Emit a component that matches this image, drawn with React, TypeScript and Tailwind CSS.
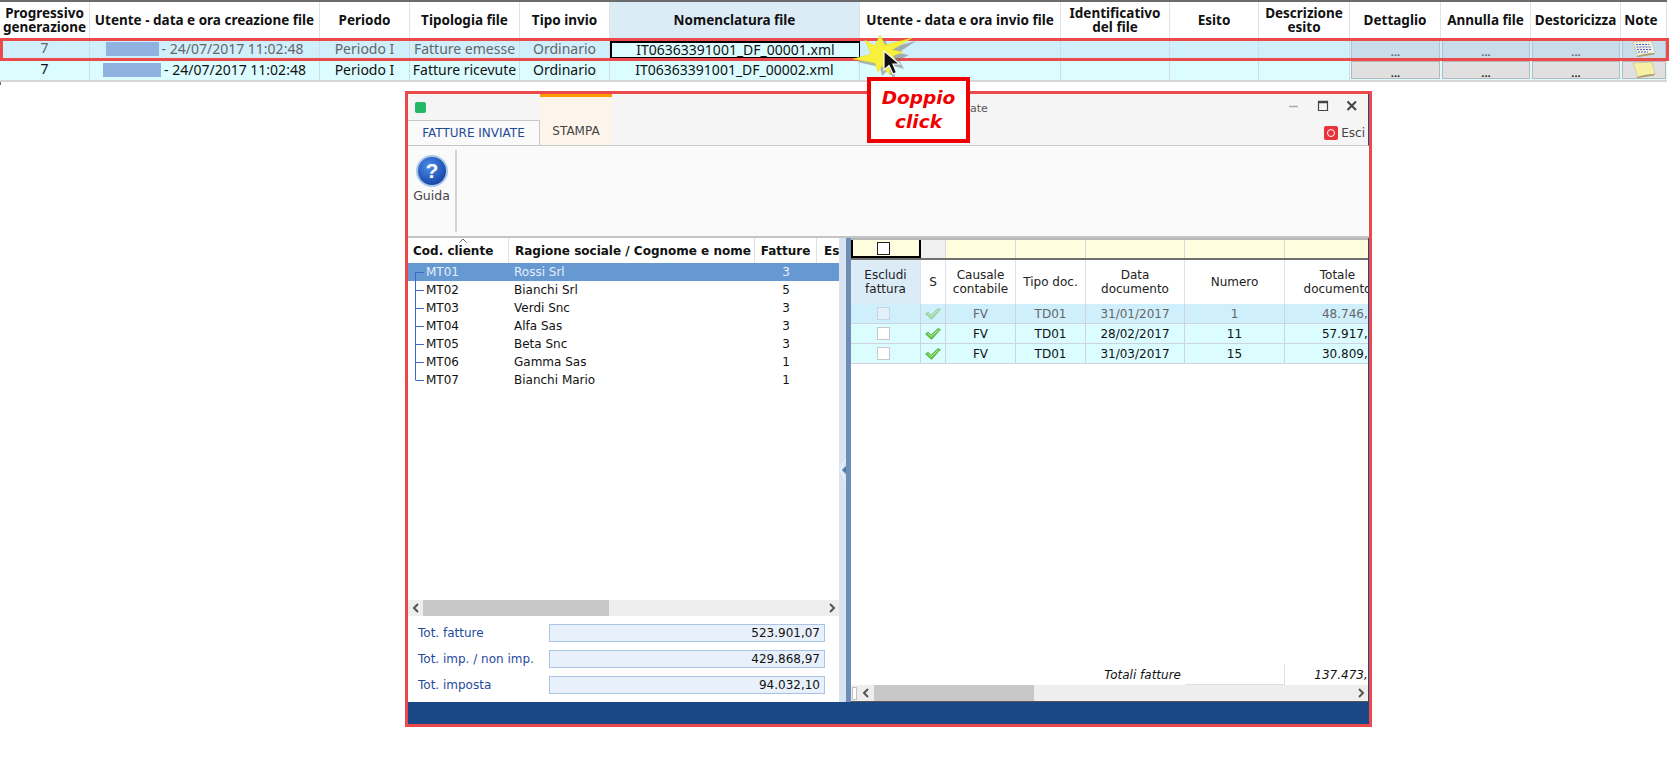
import React from "react";

const topCols = "grid grid-cols-[90px_230px_90px_110px_90px_250px_201px_109px_89px_91px_91px_90px_90px_46px]";
const heads = ["Progressivo generazione", "Utente - data e ora creazione file", "Periodo", "Tipologia file", "Tipo invio", "Nomenclatura file", "Utente - data e ora invio file", "Identificativo del file", "Esito", "Descrizione esito", "Dettaglio", "Annulla file", "Destoricizza", "Note"];

function Note({ lines }: { lines: boolean }) {
  return (
    <svg width="26" height="16" viewBox="0 0 24 16">
      <path d="M1 1 L20 0 L23 12 L6 15.500 Z" fill={lines ? "#f0f0dc" : "#f6f0a4"} stroke="#b8b088" strokeWidth="0.5" />
      <path d="M4 15.500 Q12 12 23 12 L22 13.500 L6 16 Z" fill="#a8a070" />
      {lines && <path d="M4 3.500h13M4.500 6h14M5 8.500h14M6 11h10" stroke="#4a62d8" strokeWidth="1" strokeDasharray="2 1" />}
    </svg>
  );
}

function TopRow({ dim, blue, name, kind, file, bg, h }: { dim: boolean; blue: string; name: string; kind: string; file: string; bg: string; h: string }) {
  const text = dim ? "text-[#666]" : "text-[#111]";
  const cell = "flex items-center justify-center border-r border-[#d2dbe0] whitespace-nowrap";
  const btn = dim
    ? "border-[#b4c2ce] bg-[#c8dcea] text-[#666]"
    : "border-[#b8b8b8] bg-[#e0e0e0] text-[#222]";
  return (
    <div className={`${topCols} ${bg} ${text} ${h} text-[14px] leading-none`}>
      <div className={`${cell} h-full pb-[2px]`}>7</div>
      <div className={`${cell} h-full`}>
        <span className={`${name} h-[14px] bg-[#8fb2e0] mr-[3px]`} />- 24/07/2017 11:02:48
      </div>
      <div className={`${cell} h-full`}>Periodo I</div>
      <div className={`${cell} h-full`}>{kind}</div>
      <div className={`${cell} h-full`}>Ordinario</div>
      <div className={`${cell} text-[#111] ${blue}`}>{file}</div>
      <div className={`${cell} h-full`} />
      <div className={`${cell} h-full`} />
      <div className={`${cell} h-full`} />
      <div className={`${cell} h-full`} />
      {[0, 1, 2].map((i) => (
        <div key={i} className="px-[1px] py-[1px] h-full">
          <div className={`h-full border ${btn} flex items-center justify-center pt-1 font-bold text-[11px]`}>...</div>
        </div>
      ))}
      <div className="px-[1px] py-[1px] h-full">
        <div className={`h-full border ${btn} flex items-center justify-center`}>
          <Note lines={dim} />
        </div>
      </div>
    </div>
  );
}

const clients: [string, string, string][] = [
  ["MT01", "Rossi Srl", "3"],
  ["MT02", "Bianchi Srl", "5"],
  ["MT03", "Verdi Snc", "3"],
  ["MT04", "Alfa Sas", "3"],
  ["MT05", "Beta Snc", "3"],
  ["MT06", "Gamma Sas", "1"],
  ["MT07", "Bianchi Mario", "1"],
];

function Tree({ first, last }: { first: boolean; last: boolean }) {
  return (
    <svg width="18" height="18" viewBox="0 0 18 18" className="shrink-0">
      <path d={`M7.500 ${first ? 9 : 0}V${last ? 9 : 18}M7.500 9.500H16`} stroke="#3f66c8" strokeWidth="1" fill="none" />
    </svg>
  );
}

function Chevron({ right, color = "#555" }: { right?: boolean; color?: string }) {
  return (
    <svg width="8" height="10" viewBox="0 0 8 10">
      <path d={right ? "M2 1l4 4-4 4" : "M6 1L2 5l4 4"} stroke={color} strokeWidth="2" fill="none" />
    </svg>
  );
}

function Check({ dim }: { dim: boolean }) {
  return (
    <svg width="16" height="12" viewBox="0 0 16 12" className={dim ? "opacity-50" : ""}>
      <path d="M0.500 6 L3 4 L6 7 L13 0.500 L15.500 1.500 L6.500 11.500 Z" fill="#5fc43c" stroke="#3f9a2a" strokeWidth="0.5" />
      <path d="M3 5.500 L6 8.500 L13.500 2" stroke="#c8f0b0" strokeWidth="1" fill="none" />
    </svg>
  );
}

const rightCols = "grid grid-cols-[70px_25px_70px_70px_99px_100px_106px] w-[540px]";

const docs: [string, string, string][] = [
  ["31/01/2017", "1", "48.746,00"],
  ["28/02/2017", "11", "57.917,36"],
  ["31/03/2017", "15", "30.809,66"],
];

function Field({ label, value }: { label: string; value: string }) {
  return (
    <div className="flex items-center h-[18px]">
      <div className="w-[141px] pl-[10px] text-[#1f4aa0] whitespace-nowrap">{label}</div>
      <div className="w-[276px] h-[18px] border border-[#a9c3e4] bg-[#e8f1fb] flex items-center justify-end pr-[4px] text-[#111]">{value}</div>
    </div>
  );
}

export default function App() {
  const hc = "flex items-center justify-center text-center border-r border-[#dfe3e6] h-full px-[1px] leading-[14px]";
  const dc = "flex items-center justify-center border-r border-[#cfd3e0] h-full";
  return (
    <div className="relative w-[1676px] h-[769px] overflow-hidden bg-white font-['Liberation_Sans',sans-serif]">
      {/* top table */}
      <div className="w-[1667px] border-t-2 border-[#6b6b6b] border-b-2 border-b-[#d6d6d6] font-['Noto_Sans',sans-serif]">
        <div className={`${topCols} h-[36px] text-[13.500px] font-bold text-[#111]`}>
          {heads.map((h, i) => (
            <div key={h} className={`${hc} ${i === 5 ? "bg-[#dcecf6]" : ""} ${i === 13 ? "pr-[6px]" : ""}`}>{h}</div>
          ))}
        </div>
        <TopRow dim blue="border-2 border-black bg-[#dcfdff] h-[18px] mt-[3px]" name="w-[53px]" kind="Fatture emesse" file="IT06363391001_DF_00001.xml" bg="bg-[#cfeffd]" h="h-[22px]" />
        <TopRow dim={false} blue="h-full" name="w-[58px]" kind="Fatture ricevute" file="IT06363391001_DF_00002.xml" bg="bg-[#dcfdff]" h="h-[20px]" />
      </div>

      {/* window */}
      <div className="ml-[405px] mt-[9px] w-[967px] h-[636px] border-[3px] border-[#ec4a4a] bg-white flex flex-col text-[12px] font-['DejaVu_Sans',sans-serif] text-[#111]">
        {/* header */}
        <div className="flex h-[52px] bg-[#f5f5f5] border-b border-[#c8c8c8] shrink-0 border-r border-r-[#1a4887]">
          <div className="w-[132px] flex flex-col">
            <div className="h-[27px] flex items-center pl-[7px]">
              <div className="w-[11px] h-[11px] rounded-[2px] bg-[#22b866]" />
            </div>
            <div className="h-[25px] bg-[#fafafa] border-t border-r border-[#c8c8c8] flex items-center justify-center text-[#1f4a96] text-[12px] whitespace-nowrap">FATTURE INVIATE</div>
          </div>
          <div className="w-[72px] bg-[#fdf5ea] border-t-[3px] border-[#ff9a00] flex items-end justify-center pb-[5px] text-[12px] text-[#444]">STAMPA</div>
          <div className="flex-1 flex flex-col">
            <div className="h-[27px] flex items-center justify-end relative pb-[3px]">
              <span className="absolute left-[358px] top-[7px] text-[#555] text-[11px]">ate</span>
              <svg width="70" height="14" viewBox="0 0 70 14" className="mr-[9px]">
                <path d="M0 7.500h9" stroke="#aaa" strokeWidth="1.500" />
                <path d="M29.500 2.500h9v9h-9z" stroke="#444" strokeWidth="1.200" fill="none" />
                <path d="M29 3h10" stroke="#444" strokeWidth="2.500" />
                <path d="M58.500 2.500l8.500 8.500M67 2.500l-8.500 8.500" stroke="#444" strokeWidth="2" />
              </svg>
            </div>
            <div className="flex-1 flex items-center justify-end gap-[3px] text-[#444] text-[12px] pr-[3px] overflow-hidden">
              <div className="w-[14px] h-[14px] rounded-[2px] bg-[#e8323c] flex items-center justify-center">
                <div className="w-[8px] h-[8px] rounded-full border border-white" />
              </div>
              <span>Esci</span>
            </div>
          </div>
        </div>

        {/* ribbon */}
        <div className="h-[92px] bg-[#fafafa] shrink-0 flex border-b-2 border-[#c4c4c4]">
          <div className="w-[49px] flex flex-col items-center pt-[5px] border-r-2 border-[#d4d4d4] mt-[4px] mb-[4px]">
            <svg width="32" height="32" viewBox="0 0 32 32">
              <defs>
                <radialGradient id="g" cx="0.4" cy="0.35" r="0.75">
                  <stop offset="0" stopColor="#4c8ce8" />
                  <stop offset="1" stopColor="#0e3a9c" />
                </radialGradient>
              </defs>
              <circle cx="16" cy="16" r="15" fill="url(#g)" stroke="#a9c6e8" strokeWidth="2" />
              <text x="16" y="23" textAnchor="middle" fontSize="21" fontWeight="700" fill="#fff" fontFamily="Liberation Sans">?</text>
            </svg>
            <div className="text-[12.500px] text-[#444]">Guida</div>
          </div>
        </div>

        {/* body */}
        <div className="flex flex-1 min-h-0">
          {/* left */}
          <div className="w-[431px] flex flex-col shrink-0">
            <div className="h-[25px] grid grid-cols-[101px_246px_62px_22px] font-bold items-center shrink-0 overflow-hidden whitespace-nowrap relative">
              <div className="pl-[5px] border-r border-[#e0e0e0] h-full flex items-center">Cod. cliente</div>
              <div className="pl-[6px] border-r border-[#e0e0e0] h-full flex items-center">Ragione sociale / Cognome e nome</div>
              <div className="border-r border-[#e0e0e0] h-full flex items-center justify-center">Fatture</div>
              <div className="pl-[7px] h-full flex items-center overflow-hidden">Es</div>
              <svg width="8" height="5" viewBox="0 0 8 5" className="absolute left-[51px] top-0">
                <path d="M0.500 4.500L4 1l3.500 3.500" stroke="#666" fill="none" />
              </svg>
            </div>
            <div className="flex-1 min-h-0">
              {clients.map(([c, n, f], i) => (
                <div key={c} className={`grid grid-cols-[106px_256px_70px] h-[18px] items-center ${i === 0 ? "bg-[#6699d2] text-[#e4eefa]" : ""}`}>
                  <div className="flex items-center">
                    <Tree first={i === 0} last={i === 6} />
                    <span>{c}</span>
                  </div>
                  <div>{n}</div>
                  <div className="text-center pr-[38px]">{f}</div>
                </div>
              ))}
            </div>
            <div className="h-[16px] bg-[#eeeeee] flex items-center justify-between shrink-0">
              <div className="flex items-center h-full w-[201px]">
                <div className="w-[15px] flex justify-center"><Chevron /></div>
                <div className="flex-1 h-full bg-[#c8c8c8]" />
              </div>
              <div className="w-[15px] flex justify-center"><Chevron right /></div>
            </div>
            <div className="h-[86px] shrink-0 flex flex-col gap-[8px] pt-[8px]">
              <Field label="Tot. fatture" value="523.901,07" />
              <Field label="Tot. imp. / non imp." value="429.868,97" />
              <Field label="Tot. imposta" value="94.032,10" />
            </div>
          </div>

          {/* splitter */}
          <div className="w-[7px] bg-[#d8e4f0] flex items-center shrink-0">
            <svg width="7" height="22" viewBox="0 0 7 22">
              <path d="M7 0L1 11l6 11" stroke="#f2f6fb" strokeWidth="1" fill="none" />
              <path d="M7 7L3 11l4 4z" fill="#4a7ab0" />
            </svg>
          </div>
          <div className="w-[5px] bg-[#6f8db5] shrink-0" />

          {/* right */}
          <div className="flex-1 min-w-0 flex flex-col overflow-hidden border-r border-[#1a4887] border-b border-b-[#555]">
            <div className={`${rightCols} h-[20px] bg-[#ffffdf] shrink-0 border-t-2 border-t-[#b8b8b8]`}>
              <div className="border-2 border-black border-t-0 flex items-center justify-center pr-[5px]">
                <div className="w-[13px] h-[13px] border border-[#222] bg-white" />
              </div>
              <div className="bg-[#f0f0f0] border-r border-[#d8d8d8]" />
              <div className="border-r border-[#d8d8d8]" />
              <div className="border-r border-[#d8d8d8]" />
              <div className="border-r border-[#d8d8d8]" />
              <div className="border-r border-[#d8d8d8]" />
              <div />
            </div>
            <div className="h-[2px] bg-[#707070] shrink-0" />
            <div className={`${rightCols} h-[44px] shrink-0 text-[#222]`}>
              <div className={`${hc} bg-[#dcecf6]`}>Escludi fattura</div>
              <div className={hc}>S</div>
              <div className={hc}>Causale contabile</div>
              <div className={hc}>Tipo doc.</div>
              <div className={hc}>Data documento</div>
              <div className={hc}>Numero</div>
              <div className={hc}>Totale documento</div>
            </div>
            {docs.map(([d, n, t], i) => (
              <div key={d} className={`${rightCols} h-[20px] shrink-0 border-b border-[#cfd3e0] ${i === 0 ? "bg-[#cfeffd] text-[#666]" : "bg-[#dcfdff] text-[#111]"}`}>
                <div className={`${dc} pr-[5px]`}>
                  <div className={`w-[13px] h-[13px] border ${i === 0 ? "border-[#c8d4e0] bg-[#e4f0fa]" : "border-[#c8c8c8] bg-white"}`} />
                </div>
                <div className={dc}><Check dim={i === 0} /></div>
                <div className={dc}>FV</div>
                <div className={dc}>TD01</div>
                <div className={dc}>{d}</div>
                <div className={dc}>{n}</div>
                <div className="flex items-center justify-end pr-[8px] h-full">{t}</div>
              </div>
            ))}
            <div className="flex-1" />
            <div className={`${rightCols} h-[21px] shrink-0 italic items-center text-[#111]`}>
              <div className="col-span-5 text-right pr-[4px] whitespace-nowrap">Totali fatture</div>
              <div className="h-full border-r border-b border-[#e0e0e0]" />
              <div className="text-right pr-[8px]">137.473,12</div>
            </div>
            <div className="h-[16px] bg-[#eeeeee] flex items-center justify-between shrink-0">
              <div className="flex items-center h-full w-[183px]">
                <div className="w-[5px] h-[13px] ml-[1px] border border-[#c0c0c0] bg-white" />
                <div className="w-[17px] flex justify-center"><Chevron /></div>
                <div className="flex-1 h-full bg-[#c8c8c8]" />
              </div>
              <div className="w-[15px] flex justify-center"><Chevron right /></div>
            </div>
          </div>
        </div>

        {/* footer */}
        <div className="h-[22px] bg-[#1a4887] shrink-0" />
      </div>

      {/* annotations lying over the page */}
      <div className="absolute left-0 top-[38px] w-[1669px] h-[23px] border-[3px] border-[#ec4a4a] pointer-events-none" />
      <div className="absolute left-0 top-[82px] w-[1px] h-[3px] bg-[#6b6b6b]" />
      <svg width="76" height="72" viewBox="0 0 76 72" className="absolute left-[848px] top-[28px] pointer-events-none">
        <path d="M17 12 L27 18 L32 7 L37 17 L64 10 L46 22 L57 24 L47 29 L52 38 L42 35 L43 48 L35 40 L30 45 L28 36 L5 31 L24 26 Z" fill="#777" opacity="0.55" transform="translate(4 3)" />
        <path d="M17 12 L27 18 L32 7 L37 17 L64 10 L44 22 L55 24 L45 28 L50 36 L41 33 L42 47 L34 38 L30 44 L27 35 L5 31 L23 26 Z" fill="#f8f03a" stroke="#e8dc20" strokeWidth="0.5" />
      </svg>
      <svg width="20" height="26" viewBox="0 0 20 26" className="absolute left-[882px] top-[50px] pointer-events-none">
        <path d="M2 1 L2 20 L7 15.500 L11 24 L14.500 22.500 L11 14 L17.500 14 Z" fill="#111" stroke="#fff" strokeWidth="1.200" />
      </svg>
      <div className="absolute left-[867px] top-[77px] w-[103px] h-[66px] border-[4px] border-[#f00000] bg-white flex items-center justify-center text-center text-[#f00000] font-bold italic text-[18.500px] leading-[24px] font-['DejaVu_Sans',sans-serif]">
        Doppio<br />click
      </div>
    </div>
  );
}
